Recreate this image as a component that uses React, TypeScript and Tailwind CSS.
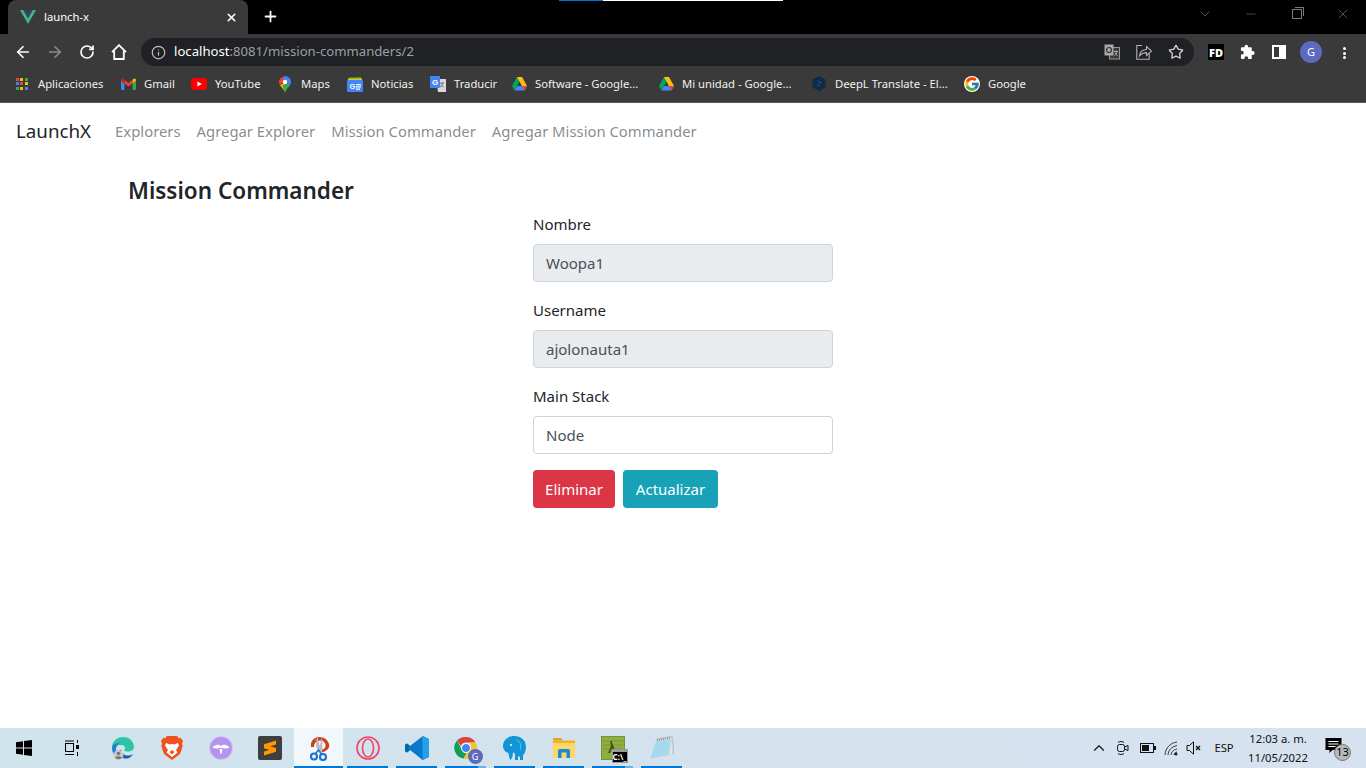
import { ArrowLeft, ArrowRight, ChevronDown, ChevronUp, Info, Minus, Plus, RotateCw, Star, X } from "lucide-react";
import { FcGoogle } from "react-icons/fc";

const VueLogo = () => (
  <svg width="16" height="14" viewBox="0 0 16 14">
    <path d="M0 0h3.2L8 8.3 12.8 0H16L8 14z" fill="#41b883" />
    <path d="M3.2 0h2.7L8 3.6 10.1 0h2.7L8 8.3z" fill="#35495e" />
  </svg>
);

const AppsIcon = () => {
  const colors = ["#ea4335", "#fbbc05", "#34a853", "#4285f4", "#ea4335", "#fbbc05", "#34a853", "#fbbc05", "#4285f4"];
  return (
    <div className="grid h-[13px] w-[13px] grid-cols-3 gap-px">
      {colors.map((color, i) => (
        <svg key={i} width="3" height="3" viewBox="0 0 3 3">
          <rect width="3" height="3" fill={color} />
        </svg>
      ))}
    </div>
  );
};

const GmailIcon = () => (
  <svg width="15" height="12" viewBox="0 0 15 12">
    <path d="M0 2.5V11a1 1 0 0 0 1 1h2.4V5.5z" fill="#4285f4" />
    <path d="M15 2.5V11a1 1 0 0 1-1 1h-2.4V5.5z" fill="#34a853" />
    <path d="M3.4 5.5V1.7L7.5 5l4.1-3.3v3.8L7.5 8.6z" fill="#ea4335" />
    <path d="M0 2.5C0 .6 2 -.5 3.4 1.7v3.8z" fill="#c5221f" />
    <path d="M15 2.5c0-1.9-2-3-3.4-.8v3.8z" fill="#fbbc05" />
  </svg>
);

const YoutubeIcon = () => (
  <svg width="16" height="12" viewBox="0 0 16 12">
    <rect width="16" height="12" rx="3" fill="#f00" />
    <path d="M6.4 3.4v5.2L10.8 6z" fill="#fff" />
  </svg>
);

const MapsIcon = () => (
  <svg width="12" height="16" viewBox="0 0 12 16">
    <path d="M6 0a6 6 0 0 1 6 6c0 1.2-.4 2.2-1 3.2L3 2.2A6 6 0 0 1 6 0z" fill="#4285f4" />
    <path d="M3 1L0.9 3A6 6 0 0 0 1 9.2L6 5z" fill="#ea4335" />
    <path d="M1 9.2C2.500 11.500 4.800 13 6 16l1.800-3L5 7z" fill="#fbbc05" />
    <path d="M6 16c1-2.800 3.500-4.500 5-6.800L7.500 6 3.500 10z" fill="#34a853" />
    <circle cx="6" cy="6" r="2.200" fill="#fff" />
  </svg>
);

const NewsIcon = () => (
  <svg width="16" height="16" viewBox="0 0 16 16">
    <path d="M2 3V1.500L14 1v2z" fill="#34a853" />
    <path d="M1 5V2.500h14V5z" fill="#fbbc05" />
    <rect y="4" width="16" height="12" rx="1" fill="#4285f4" />
    <text x="2.500" y="13" fontSize="7.500" fontWeight="700" fill="#fff" fontFamily="Liberation Sans, sans-serif">G</text>
    <path d="M9 8h5v1.200H9zM9 10.300h5v1.200H9zM9 12.600h4v1.200H9z" fill="#fff" />
  </svg>
);

const TranslateIcon = () => (
  <svg width="16" height="16" viewBox="0 0 16 16">
    <path d="M6 3h10v13H8z" fill="#d9d9d9" />
    <rect width="10" height="12" rx="1" fill="#4285f4" />
    <text x="2" y="9" fontSize="8" fontWeight="700" fill="#fff" fontFamily="Liberation Sans, sans-serif">G</text>
    <path d="M10 7h4M12 6v1M13 7c-.3 2-1.500 3.500-3 4M10.800 8.500c.5 1.200 1.500 2 2.700 2.500" stroke="#777" strokeWidth="1" fill="none" />
  </svg>
);

const DriveIcon = () => (
  <svg width="15" height="14" viewBox="0 0 15 14">
    <path d="M5 0h5l-2.500 4.500L5 9H0z" fill="#00a85d" />
    <path d="M5 0h5l5 9h-5z" fill="#ffc107" />
    <path d="M0 9l2.500 4.500L5 9z" fill="#0f9d58" />
    <path d="M2.500 13.500h10L15 9H5z" fill="#4285f4" />
    <path d="M12.500 13.500L15 9h-5z" fill="#ea4335" />
  </svg>
);

const DeeplIcon = () => (
  <svg width="14" height="16" viewBox="0 0 14 16">
    <path d="M7 0l6.500 3.500v8L9 13.500V16l-2.500-1.500L.5 11.500v-8z" fill="#0f2b46" />
    <path d="M5 4.500l4 2-4 2M5 8.500l3 2" stroke="#1b4a70" strokeWidth="1.200" fill="none" />
  </svg>
);

const TranslatePageIcon = () => (
  <svg width="16" height="16" viewBox="0 0 16 16">
    <rect x="5.500" y="3.500" width="10" height="11.500" fill="#3a3a3a" stroke="#9a9a9a" />
    <rect x="0.500" y="0.500" width="9" height="11" fill="#a8a8a8" />
    <circle cx="5" cy="6" r="2.500" fill="none" stroke="#333" strokeWidth="1.200" />
    <path d="M10 7.500h4M12 6.500v1M13 8c-.4 1.800-1.400 3-2.500 3.600M11 9c.4 1 1.200 2 2.400 2.500" stroke="#aaa" fill="none" />
  </svg>
);

const ShareIcon = () => (
  <svg width="16" height="16" viewBox="0 0 16 16" fill="none" stroke="#b4b4b4" strokeWidth="1.100">
    <path d="M6 1.500H.8v13.700h12.400V10" />
    <path d="M3.500 12c.5-4 3-6.500 7-6.500V2.500l5 4.600-5 4.400V8.600c-3 0-5 1-7 3.400z" />
  </svg>
);

const PuzzleIcon = () => (
  <svg width="15" height="15" viewBox="0 0 16 16" fill="#fff">
    <path d="M13.500 7.500h-1V4.600c0-.6-.5-1.100-1.100-1.100H8.500v-1a1.800 1.800 0 0 0-3.600 0v1H2a1 1 0 0 0-1 1.100v2.700h1a2 2 0 0 1 0 4H1V15a1 1 0 0 0 1 1h2.700v-1a2 2 0 0 1 4 0v1h2.700a1 1 0 0 0 1.100-1v-3.300h1a2.100 2.100 0 0 0 0-4.200z" />
  </svg>
);

const HomeIcon = () => (
  <svg width="16" height="16" viewBox="0 0 16 16" fill="none" stroke="#fff" strokeWidth="1.800">
    <path d="M1 8.200L8 1.200l7 7M3.200 7v8h9.600V7" />
  </svg>
);

const EdgeIcon = () => (
  <svg width="24" height="24" viewBox="0 0 24 24">
    <path d="M1 12C1 5 6 1 12 1c7 0 11 5 11 10 0 3-3 4.500-6 4.500-2 0-4-.5-4-1.500 2-1 1.500-5-3-5C5 9 2 10 1 12z" fill="#2fc4a5" />
    <path d="M1 12c0-3.500 4-5.500 8-4.500-3 1-4.500 4-3.800 8C6 19 9 23 12.500 23 6 23 1 18 1 12z" fill="#1b83cf" />
    <path d="M7 15c0 5 5 8 9 7.500 3-.4 5-2.500 6-4.500-3 2-7 2-9 .5-2-1.500-3-3.500-3-5z" fill="#0e5fa8" />
    <circle cx="7.500" cy="19" r="5" fill="#c9c9c9" />
    <circle cx="7.500" cy="17.500" r="1.800" fill="#777" />
    <path d="M4 22c.5-2.500 6.500-2.500 7 0-2 1.500-5 1.500-7 0z" fill="#777" />
  </svg>
);

const BraveIcon = () => (
  <svg width="22" height="24" viewBox="0 0 22 24">
    <path d="M6 0h10l2 2.300 2-.3 2 3-1 2.500.7 2.500L19 18l-8 6-8-6L.3 10 1 7.500 0 5l2-3 2 .3z" fill="#f1501f" />
    <path d="M5 7l4 1.500 2-.8 2 .8L17 7l1 2.500-3 4.500 1.500 2.500L11 21l-5.500-4.500L7 14 4 9.500z" fill="#fff" />
    <path d="M8.500 16l2.500-2 2.500 2-2.500 2.500z" fill="#f1501f" />
  </svg>
);

const PurpleIcon = () => (
  <svg width="24" height="24" viewBox="0 0 24 24">
    <circle cx="12" cy="12" r="11.500" fill="#b493ee" stroke="#d5c6f4" />
    <path d="M3.500 11.500C6 8 10 8 12 10c2-2 6-2 8.500 1.500-3 1.800-6 1-8.500.2-2.500.8-5.500 1.600-8.500-.2z" fill="#fff" />
    <path d="M10.500 13h3l-1 5h-1z" fill="#fff" />
  </svg>
);

const SublimeIcon = () => (
  <svg width="24" height="24" viewBox="0 0 24 24">
    <rect width="24" height="24" rx="2" fill="#3e3e3e" />
    <path d="M18 4.500v4l-12 3.800v-4zM18 11.800v4l-12 3.800v-4zM6 8.500l12 3.600v3.800L6 12.300z" fill="#ff9800" />
  </svg>
);

const SnipIcon = () => (
  <svg width="24" height="26" viewBox="0 0 24 26">
    <path d="M8 3a10 10 0 0 1 14 6c1 4-2 7-7 8.500l-.5-2.500c3-1 4.500-3 4-5.500-.5-2.500-3-4.500-5.500-4-2 .3-3 1-4 2z" fill="#c8401c" />
    <path d="M4 12a9 9 0 0 1 4-9l1 4c-1.500 1.500-2 3-2 5z" fill="#c8401c" />
    <path d="M10 0l3.500 14-1.500 4-3-7zM15 1l.5 13-2.500 5-1-4z" fill="#bdbdbd" />
    <circle cx="7" cy="21.500" r="3" fill="none" stroke="#1e73d0" strokeWidth="2.200" />
    <circle cx="16" cy="22" r="3" fill="none" stroke="#1e73d0" strokeWidth="2.200" />
    <path d="M8.500 18.500l3-3.500 3 4" stroke="#1e73d0" strokeWidth="1.500" fill="none" />
  </svg>
);

const OperaIcon = () => (
  <svg width="24" height="24" viewBox="0 0 24 24" fill="none" stroke="#ef4a6e" strokeWidth="1.700">
    <circle cx="12" cy="12" r="11" />
    <ellipse cx="12" cy="12" rx="5.500" ry="9" />
  </svg>
);

const VscodeIcon = () => (
  <svg width="24" height="24" viewBox="0 0 24 24">
    <path d="M17.500 0L24 3v18l-6.500 3L7 13.500l10.500-9V0z" fill="#0a79c9" />
    <path d="M17.500 0L24 3v18l-6.500 3z" fill="#24a0ed" />
    <path d="M17.500 5.500L9.500 12l8 6.500v5.300L5 14 2 16.500 0 15.200V8.800l2-1.300L5 10 17.500.2z" fill="#0a79c9" />
    <path d="M0 8.800L2 7.500 5 10l-2.500 2 2.500 2-3 2.500-2-1.300z" fill="#0667a8" />
  </svg>
);

const ChromeIcon = () => (
  <div className="relative h-6 w-6">
    <svg width="24" height="24" viewBox="0 0 24 24">
      <path d="M12 1a11 11 0 0 1 9.500 5.500H12A5.500 5.500 0 0 0 6.800 10L3 4.500A11 11 0 0 1 12 1z" fill="#db4437" />
      <path d="M3 4.500L7.500 13a5.500 5.500 0 0 0 5 4.400L9.500 22.600A11 11 0 0 1 3 4.500z" fill="#0f9d58" />
      <path d="M21.500 6.500A11 11 0 0 1 9.500 22.600L14 15a5.500 5.500 0 0 0 1.500-8.500z" fill="#fbc02d" />
      <circle cx="12" cy="12" r="4.500" fill="#4285f4" stroke="#fff" />
    </svg>
    <div className="absolute -right-[5px] -bottom-[4px] flex h-[15px] w-[15px] items-center justify-center rounded-full bg-[#5c6bc0] text-[9px] text-white">G</div>
  </div>
);

const ElephantIcon = () => (
  <svg width="24" height="24" viewBox="0 0 24 24">
    <path d="M11 0c7 0 12 4 12 11 0 4-1.500 7-3 8.500V24h-3v-3l-2-1v4h-3v-6l-2-2c0 3-.5 6-2.500 8C6 22 6 20 5.500 17 2 16 0 13 0 10 0 4 5 0 11 0z" fill="#1295d8" />
    <circle cx="8" cy="9" r="1" fill="#fff" />
    <path d="M13 4c4 1 6 5 4 10" stroke="#66c5ee" strokeWidth="1" fill="none" />
  </svg>
);

const FolderIcon = () => (
  <svg width="22" height="20" viewBox="0 0 22 20">
    <path d="M0 1a1 1 0 0 1 1-1h7l2 2.500H0z" fill="#e3a21a" />
    <rect y="2.500" width="22" height="4" fill="#f0b429" />
    <path d="M0 5h21a1 1 0 0 1 1 1v13a1 1 0 0 1-1 1H1a1 1 0 0 1-1-1z" fill="#ffd765" />
    <path d="M5 20v-7a2 2 0 0 1 2-2h8a2 2 0 0 1 2 2v7h-3.500v-5.500h-5V20z" fill="#1e88d8" />
  </svg>
);

const TerminalIcon = () => (
  <div className="relative h-6 w-6">
    <svg width="24" height="24" viewBox="0 0 24 24">
      <rect width="24" height="24" fill="#8fae3f" stroke="#5d7a22" />
      <path d="M2 5h20M2 9h20M2 13h20" stroke="#7b9a30" />
      <path d="M9 5l1.500 0L15 17h-2l-2-5-2 5H7l3-7z" fill="#3f5014" />
    </svg>
    <div className="absolute -right-[3px] -bottom-[3px] flex h-[14px] w-[16px] items-end justify-center border border-t-[3px] border-[#999] bg-black text-[8px] leading-[10px] font-bold text-white">C:\_</div>
  </div>
);

const NotepadIcon = () => (
  <svg width="24" height="24" viewBox="0 0 24 24">
    <path d="M7 3l15-3 2 17-16 4z" fill="#d7d7d7" stroke="#9c9c9c" strokeWidth=".5" />
    <path d="M6 5l15-3 1 16-17 5L0 24z" fill="#e4e4e4" />
    <path d="M6 5l15-2-2 16L0 23z" fill="#a6d9ee" />
    <path d="M7 4l13-2" stroke="#888" strokeWidth="1.500" strokeDasharray="1 1" />
  </svg>
);

const WindowsIcon = () => (
  <svg width="16" height="16" viewBox="0 0 16 16" fill="#000">
    <path d="M0 2.300l7-1v6.200H0zM8 1.100L16 0v7.500H8zM0 8.500h7v6.200l-7-1zM8 8.500h8V16l-8-1.100z" />
  </svg>
);

const TaskViewIcon = () => (
  <svg width="16" height="16" viewBox="0 0 16 16" fill="none" stroke="#000">
    <rect x="1.500" y="3.500" width="8" height="8" />
    <path d="M1 1h9M1 14.500h9M13.500 0v3M13.500 12v4" />
    <rect x="12" y="5" width="3" height="4" fill="#000" stroke="none" />
  </svg>
);

const MeetIcon = () => (
  <svg width="16" height="16" viewBox="0 0 16 16" fill="none" stroke="#111">
    <rect x="2.500" y="4.500" width="7" height="7" rx="2" />
    <path d="M9.500 7l3.500-1.500v5L9.500 9M3 2.500c1-1.300 5-1.300 6 0M3 13.500c1 1.300 5 1.300 6 0" />
  </svg>
);

const BatteryIcon = () => (
  <svg width="16" height="10" viewBox="0 0 16 10" fill="none" stroke="#111">
    <rect x=".5" y=".5" width="13" height="9" />
    <rect x="2" y="2" width="7" height="6" fill="#111" stroke="none" />
    <rect x="14" y="3" width="2" height="4" fill="#111" stroke="none" />
  </svg>
);

const WifiIcon = () => (
  <svg width="16" height="16" viewBox="0 0 16 16" fill="none" stroke="#222" strokeWidth=".9">
    <path d="M1 15C1.500 8 6 3 13 2M4 15c.5-5 3-8 9-9.500M7 15c.3-3 2-5 6-6M10 15c.2-1.500 1-2.500 3-3" />
    <circle cx="12" cy="14" r="1.500" fill="#222" stroke="none" />
  </svg>
);

const MuteIcon = () => (
  <svg width="16" height="14" viewBox="0 0 16 14" fill="none" stroke="#111">
    <path d="M1 4.500h2.500L7.500.8v12.400L3.500 9.500H1z" />
    <path d="M10 5l4 4M14 5l-4 4" strokeWidth="1.300" />
  </svg>
);

const NotificationIcon = () => (
  <div className="relative h-5 w-[20px]">
    <svg width="17" height="15" viewBox="0 0 16 15" className="absolute top-0 left-0">
      <path d="M0 0h16v12H7l-3 3v-3H0z" fill="#000" />
      <path d="M3 3.500h10M3 6h10M3 8.500h7" stroke="#fff" />
    </svg>
    <div className="absolute top-[6px] left-[9px] flex h-[17px] w-[17px] items-center justify-center rounded-full border border-[#777] bg-[#b5b9bc] text-[11px] text-black">13</div>
  </div>
);

const bookmarks = [
  { icon: <AppsIcon />, label: "Aplicaciones", width: "w-[106px]" },
  { icon: <GmailIcon />, label: "Gmail", width: "w-[71px]" },
  { icon: <YoutubeIcon />, label: "YouTube", width: "w-[86px]" },
  { icon: <MapsIcon />, label: "Maps", width: "w-[70px]" },
  { icon: <NewsIcon />, label: "Noticias", width: "w-[83px]" },
  { icon: <TranslateIcon />, label: "Traducir", width: "w-[81px]" },
  { icon: <DriveIcon />, label: "Software - Google...", width: "w-[147px]" },
  { icon: <DriveIcon />, label: "Mi unidad - Google...", width: "w-[153px]" },
  { icon: <DeeplIcon />, label: "DeepL Translate - El...", width: "w-[153px]" },
  { icon: <FcGoogle size={16} className="rounded-full bg-white" />, label: "Google", width: "w-[70px]" },
];

const pinnedApps = [<EdgeIcon key="edge" />, <BraveIcon key="brave" />, <PurpleIcon key="purple" />, <SublimeIcon key="sublime" />];

const taskbarApps = [
  { icon: <SnipIcon />, active: true },
  { icon: <OperaIcon /> },
  { icon: <VscodeIcon /> },
  { icon: <ChromeIcon />, stacked: true },
  { icon: <ElephantIcon /> },
  { icon: <FolderIcon /> },
  { icon: <TerminalIcon />, stacked: true },
  { icon: <NotepadIcon /> },
];

const navLinks = ["Explorers", "Agregar Explorer", "Mission Commander", "Agregar Mission Commander"];

const App = () => {
  return (
    <div className="flex h-screen flex-col overflow-hidden bg-white font-['Noto_Sans',sans-serif] text-[#212529]">
      {/* Barra de pestañas */}
      <div className="relative flex h-[34px] items-start bg-black">
        <div className="absolute top-0 left-[559px] h-px w-[224px] bg-white">
          <div className="h-px w-[44px] bg-[#0a6fd0]" />
        </div>
        <div className="ml-2 flex h-[34px] w-[240px] items-center rounded-t-lg bg-[#3a3a3a] pr-[10px] pl-3">
          <VueLogo />
          <span className="ml-2 flex-1 text-[11.25px] text-white">launch-x</span>
          <X size={13} strokeWidth={3} className="text-white" />
        </div>
        <Plus size={17} strokeWidth={2.5} className="mt-[8px] ml-[14px] text-white" />
        <div className="ml-auto flex h-7 items-center pr-[15px]">
          <ChevronDown size={16} strokeWidth={1} className="mr-[31px] text-[#7a7a7a]" />
          <Minus size={14} strokeWidth={1} className="mr-[34px] text-[#7a7a7a]" />
          <div className="relative mr-[33px] h-[10px] w-[10px] border border-[#7a7a7a] after:absolute after:-top-[3px] after:-right-[3px] after:h-[9px] after:w-[9px] after:border-t after:border-r after:border-[#7a7a7a]" />
          <X size={16} strokeWidth={1} className="text-[#7a7a7a]" />
        </div>
      </div>

      {/* Barra de direcciones */}
      <div className="flex h-[32px] items-end bg-[#3a3a3a] pl-[14px]">
        <ArrowLeft size={18} strokeWidth={2.25} className="mb-[5px] text-white" />
        <ArrowRight size={18} strokeWidth={2.25} className="mb-[5px] ml-[14px] text-[#8b8b8b]" />
        <RotateCw size={16} strokeWidth={2.5} className="mb-[6px] ml-[15px] text-white" />
        <div className="mb-[6px] ml-4">
          <HomeIcon />
        </div>
        <div className="ml-[14px] flex h-7 w-[1053px] items-center rounded-full bg-[#202124] px-[10px]">
          <Info size={15} className="text-[#bdbdbd]" />
          <span className="ml-[8px] flex-1 text-[13.15px] text-[#9aa0a6]">
            <span className="text-white">localhost</span>:8081/mission-commanders/2
          </span>
          <TranslatePageIcon />
          <div className="ml-4">
            <ShareIcon />
          </div>
          <Star size={16} strokeWidth={2} className="ml-4 text-[#d0d0d0]" />
        </div>
        <div className="mb-[6px] ml-[14px] flex h-4 w-4 items-center justify-center bg-black text-[11px] leading-none font-black text-white">FD</div>
        <div className="mb-[7px] ml-4">
          <PuzzleIcon />
        </div>
        <div className="mb-[7px] ml-[17px] h-[14px] w-[14px] border-2 border-r-[7px] border-white" />
        <div className="mb-[3px] ml-[14px] flex h-[22px] w-[22px] items-center justify-center rounded-full bg-[#5c6bc0] text-[11px] text-white">G</div>
        <div className="mb-[7px] ml-[21px] flex h-[12px] flex-col justify-between">
          <div className="h-[3px] w-[3px] rounded-full bg-white" />
          <div className="h-[3px] w-[3px] rounded-full bg-white" />
          <div className="h-[3px] w-[3px] rounded-full bg-white" />
        </div>
      </div>

      {/* Marcadores */}
      <div className="flex h-[37px] items-center border-b border-[#5a5a5a] bg-[#3a3a3a] pl-[14px]">
        {bookmarks.map((bookmark) => (
          <div key={bookmark.label} className={`flex items-center ${bookmark.width}`}>
            <div className="flex w-4 justify-center">{bookmark.icon}</div>
            <span className="ml-[8px] text-[11.25px] whitespace-nowrap text-[#f1f1f1]">{bookmark.label}</span>
          </div>
        ))}
      </div>

      {/* Página */}
      <main className="flex-1">
        <nav className="flex h-[56px] items-center px-4">
          <span className="mr-6 text-[18.75px]">LaunchX</span>
          <div className="flex gap-4">
            {navLinks.map((link) => (
              <a key={link} className="text-[14.85px] text-[#212529]/55">
                {link}
              </a>
            ))}
          </div>
        </nav>
        <h2 className="mt-[17px] ml-[128px] text-[22.5px] leading-[29px] font-semibold">Mission Commander</h2>
        <form className="mx-auto mt-[7px] flex w-[300px] flex-col">
          <label className="mb-2 text-[15px] leading-6">Nombre</label>
          <input readOnly disabled value="Woopa1" className="mb-4 h-[38px] rounded border border-[#ced4da] bg-[#e9ecef] px-3 text-[15px] text-[#495057]" />
          <label className="mb-2 text-[15px] leading-6">Username</label>
          <input readOnly disabled value="ajolonauta1" className="mb-4 h-[38px] rounded border border-[#ced4da] bg-[#e9ecef] px-3 text-[15px] text-[#495057]" />
          <label className="mb-2 text-[15px] leading-6">Main Stack</label>
          <input readOnly value="Node" className="mb-4 h-[38px] rounded border border-[#ced4da] bg-white px-3 text-[15px] text-[#495057]" />
          <div className="flex gap-2">
            <button type="button" className="h-[38px] w-[82px] rounded bg-[#dc3545] text-[15px] text-white">Eliminar</button>
            <button type="button" className="h-[38px] w-[95px] rounded bg-[#17a2b8] text-[15px] text-white">Actualizar</button>
          </div>
        </form>
      </main>

      {/* Barra de tareas */}
      <div className="flex h-[40px] items-center bg-gradient-to-r from-[#d0e4ec] to-[#d7e2f0]">
        <div className="flex w-[48px] justify-center">
          <WindowsIcon />
        </div>
        <div className="flex w-[48px] justify-center">
          <TaskViewIcon />
        </div>
        <div className="flex items-center pl-[2px]">
          {pinnedApps.map((icon, i) => (
            <div key={i} className="flex h-[40px] w-[49px] items-center justify-center">
              {icon}
            </div>
          ))}
          {taskbarApps.map((app, i) => (
            <div key={i} className={`relative flex h-[40px] w-[49px] items-center justify-center ${app.active ? "bg-[#f1f7fb]" : ""}`}>
              {app.icon}
              <div className={`absolute bottom-0 h-[2px] bg-[#0078d7] ${app.active ? "inset-x-0" : "inset-x-[4px]"}`} />
              {app.stacked && <div className="absolute right-[4px] bottom-0 h-[2px] w-2 bg-[#6fb1e4]" />}
            </div>
          ))}
        </div>
        <div className="ml-auto flex items-center pr-[21px]">
          <ChevronUp size={18} strokeWidth={1.5} className="text-[#111]" />
          <div className="ml-[7px]"><MeetIcon /></div>
          <div className="ml-[9px]"><BatteryIcon /></div>
          <div className="ml-2"><WifiIcon /></div>
          <div className="ml-[6px]"><MuteIcon /></div>
          <span className="ml-[11px] w-[22px] text-center text-[11.25px] text-[#111]">ESP</span>
          <div className="ml-[13px] flex w-[60px] flex-col items-center text-[11.25px] leading-[19px] text-[#111]">
            <span className="whitespace-nowrap">12:03 a. m.</span>
            <span>11/05/2022</span>
          </div>
          <div className="ml-[17px]"><NotificationIcon /></div>
        </div>
      </div>
    </div>
  );
};

export default App;
